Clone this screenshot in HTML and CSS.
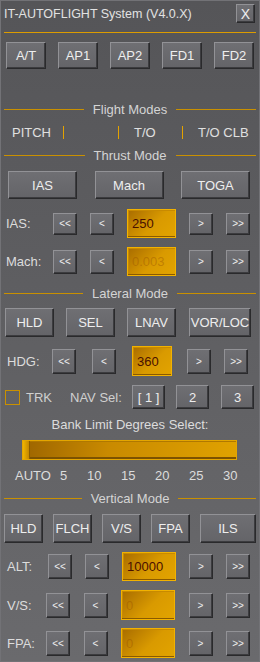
FILE: index.html
```html
<!DOCTYPE html>
<html>
<head>
<meta charset="utf-8">
<link rel="stylesheet" href="styles.css">
</head>
<body>
<div class="win">
  <div class="titlebar"><span class="title">IT-AUTOFLIGHT System (V4.0.X)</span><div class="btn xbtn">X</div></div>
  <div class="hr"></div>

  <div class="brow top5">
    <div class="btn">A/T</div><div class="btn">AP1</div><div class="btn">AP2</div><div class="btn">FD1</div><div class="btn">FD2</div>
  </div>

  <div class="sep s-fm"><i></i><span>Flight Modes</span><i></i></div>
  <div class="fma">
    <span class="fm f1">PITCH</span><i class="bar"></i><span class="fm f2"></span><i class="bar"></i><span class="fm f3">T/O</span><i class="bar"></i><span class="fm f4">T/O CLB</span>
  </div>

  <div class="sep s-tm"><i></i><span>Thrust Mode</span><i></i></div>
  <div class="brow thrust">
    <div class="btn">IAS</div><div class="btn">Mach</div><div class="btn">TOGA</div>
  </div>

  <div class="spin r-ias">
    <span class="lbl">IAS:</span>
    <div class="ctrls"><div class="btn sb">&lt;&lt;</div><div class="btn sb">&lt;</div><div class="field">250</div><div class="btn sb">&gt;</div><div class="btn sb">&gt;&gt;</div></div>
  </div>
  <div class="spin r-mach">
    <span class="lbl">Mach:</span>
    <div class="ctrls"><div class="btn sb">&lt;&lt;</div><div class="btn sb">&lt;</div><div class="field off">0.003</div><div class="btn sb">&gt;</div><div class="btn sb">&gt;&gt;</div></div>
  </div>

  <div class="sep s-lm"><i></i><span>Lateral Mode</span><i></i></div>
  <div class="brow lat">
    <div class="btn">HLD</div><div class="btn">SEL</div><div class="btn">LNAV</div><div class="btn wide">VOR/LOC</div>
  </div>

  <div class="spin r-hdg">
    <span class="lbl">HDG:</span>
    <div class="ctrls"><div class="btn sb">&lt;&lt;</div><div class="btn sb">&lt;</div><div class="field">360</div><div class="btn sb">&gt;</div><div class="btn sb">&gt;&gt;</div></div>
  </div>

  <div class="navrow">
    <span class="chk"></span><span class="trk">TRK</span><span class="navsel">NAV Sel:</span>
    <div class="btn nb">[ 1 ]</div><div class="btn nb">2</div><div class="btn nb">3</div>
  </div>

  <div class="bank-t">Bank Limit Degrees Select:</div>
  <div class="slider"><div class="handle"></div></div>
  <div class="ticks"><span>AUTO</span><span>5</span><span>10</span><span>15</span><span>20</span><span>25</span><span>30</span></div>

  <div class="sep s-vm"><i></i><span>Vertical Mode</span><i></i></div>
  <div class="brow vert">
    <div class="btn">HLD</div><div class="btn">FLCH</div><div class="btn">V/S</div><div class="btn">FPA</div><div class="btn wide">ILS</div>
  </div>

  <div class="spin r-alt">
    <span class="lbl">ALT:</span>
    <div class="ctrls"><div class="btn sb">&lt;&lt;</div><div class="btn sb">&lt;</div><div class="field">10000</div><div class="btn sb">&gt;</div><div class="btn sb">&gt;&gt;</div></div>
  </div>
  <div class="spin r-vs">
    <span class="lbl">V/S:</span>
    <div class="ctrls"><div class="btn sb">&lt;&lt;</div><div class="btn sb">&lt;</div><div class="field off">0</div><div class="btn sb">&gt;</div><div class="btn sb">&gt;&gt;</div></div>
  </div>
  <div class="spin r-fpa">
    <span class="lbl">FPA:</span>
    <div class="ctrls"><div class="btn sb">&lt;&lt;</div><div class="btn sb">&lt;</div><div class="field off">0</div><div class="btn sb">&gt;</div><div class="btn sb">&gt;&gt;</div></div>
  </div>
</div>
</body>
</html>
```

FILE: styles.css
```css
* { box-sizing: border-box; }
body { margin: 0; background: #444446; font-family: "Liberation Sans", Arial, sans-serif; }

.win {
  width: 260px; height: 662px;
  border: 1px solid #727276;
  padding: 0 3px;
  background: linear-gradient(#555558, #6a6a6d);
  color: #e4e4e4;
  font-size: 13px;
  overflow: hidden;
}

.titlebar { height: 31px; display: flex; justify-content: space-between; align-items: flex-start; padding-top: 3px; }
.title { line-height: 20px; font-size: 12.5px; color: #e2e2e2; }
.hr { height: 1px; background: #dc9c00; }

.btn {
  display: flex; align-items: center; justify-content: center;
  color: #eeeeee; font-size: 13px;
  background: linear-gradient(#6f6f73, #646468);
  border: 1px solid;
  border-color: #929296 #2a2a2c #2a2a2c #929296;
  box-shadow: inset -1px -1px 0 #3c3c3f;
}
.xbtn { width: 19px; height: 19px; margin-right: 1px; font-size: 14px; }

.brow { display: flex; }
.top5 { margin-top: 9px; height: 27px; padding: 0 2px; gap: 12px; }
.top5 .btn { width: 40px; }
.thrust { margin-top: 9px; height: 28px; padding: 0 6px 0 4px; justify-content: space-between; }
.thrust .btn { width: 69px; }
.lat { margin-top: 8px; height: 29px; padding-left: 1px; gap: 12px; }
.lat .btn { width: 49px; }
.lat .wide { width: 62px; margin-left: 1px; }
.vert { margin-top: 9px; height: 29px; gap: 10px; }
.vert .btn { width: 39px; }
.vert .wide { width: 56px; }

.sep { display: flex; align-items: center; height: 14px; color: #d4d4d4; font-size: 13px; }
.sep i { flex: 1; height: 1px; background: #c99000; }
.sep span { margin: 0 9px; }
.s-fm { margin-top: 33px; }
.s-tm { margin-top: 8px; }
.s-lm { margin-top: 10px; }
.s-vm { margin-top: 8px; }

.fma { margin-top: 8px; height: 16px; display: flex; align-items: center; color: #e0e0e0; }
.fma .bar { width: 1px; height: 13px; background: #e3a200; }
.f1 { margin-left: 8px; width: 51px; }
.f2 { width: 54px; }
.f3 { width: 63px; padding-left: 15px; }
.f4 { padding-left: 15px; }

.spin { display: flex; align-items: center; }
.lbl { color: #dcdcdc; }
.ctrls { flex: 1; align-self: stretch; display: flex; justify-content: space-between; align-items: center; }
.sb { width: 24px; height: 24px; font-size: 10px; }

.field {
  align-self: stretch;
  display: flex; align-items: center;
  padding-left: 4px;
  font-size: 13px; color: #4a1000;
  background: linear-gradient(135deg, #a86c00, #d99a00 55%, #e2a400);
  border: 1px solid #f2b200;
  box-shadow: inset 0 -1px 0 #8a5a00, inset 1px 1px 0 #c88a00;
}
.field.off { color: rgba(150, 80, 0, 0.4); }

.r-ias { margin-top: 10px; height: 29px; padding: 0 6px 0 2px; }
.r-ias .lbl, .r-mach .lbl { width: 47px; }
.r-ias .field, .r-mach .field { width: 49px; }
.r-ias .sb { height: 22px; }
.r-mach { margin-top: 9px; height: 29px; padding: 0 6px 0 2px; }

.r-hdg { margin-top: 9px; height: 30px; padding: 0 8px 0 3px; }
.r-hdg .lbl { width: 45px; }
.r-hdg .field { width: 40px; }
.r-hdg .sb { height: 25px; }
.r-hdg .ctrls { justify-content: flex-start; }
.r-hdg .sb:nth-child(2) { margin-left: 16px; }
.r-hdg .field { margin-left: 16px; }
.r-hdg .sb:nth-child(4) { margin-left: 15px; }
.r-hdg .sb:nth-child(5) { margin-left: 13px; }

.r-alt { margin-top: 9px; height: 29px; padding: 0 6px 0 3px; }
.r-alt .lbl { width: 41px; }
.r-vs { margin-top: 9px; height: 30px; padding: 0 6px 0 3px; }
.r-fpa { margin-top: 8px; height: 30px; padding: 0 6px 0 3px; }
.r-vs .lbl, .r-fpa .lbl { width: 39px; }
.r-alt .field, .r-vs .field, .r-fpa .field { width: 54px; }
.r-alt .sb, .r-vs .sb, .r-fpa .sb { height: 25px; }

.navrow { margin-top: 9px; height: 24px; display: flex; align-items: center; color: #d0d0d0; }
.chk { width: 15px; height: 15px; margin-left: 1px; border: 1px solid #c99000; }
.trk { margin-left: 6px; width: 44px; }
.navsel { width: 62px; }
.nb { width: 33px; height: 24px; }
.nb + .nb { margin-left: 11px; }
.navrow .nb:last-child { margin-left: 12px; }

.bank-t { margin-top: 9px; height: 14px; line-height: 14px; text-align: center; color: #dcdcdc; }
.slider {
  margin: 8px 19px 0 18px; height: 20px;
  background: linear-gradient(100deg, #9c6400, #c98a00 40%, #e0a200);
  border: 1px solid #e4a600;
  box-shadow: inset 0 -2px 0 #7d5200, inset 0 1px 0 #b07800;
  display: flex;
}
.handle {
  width: 7px; height: 100%;
  background: linear-gradient(90deg, #f0b400, #c48800);
  border-right: 1px solid #8a5c00;
}
.ticks {
  margin-top: 9px; height: 14px; line-height: 14px;
  display: grid; grid-template-columns: 45px 27px 34px 34px 34px 34px auto;
  padding-left: 11px; color: #dcdcdc;
}
```
